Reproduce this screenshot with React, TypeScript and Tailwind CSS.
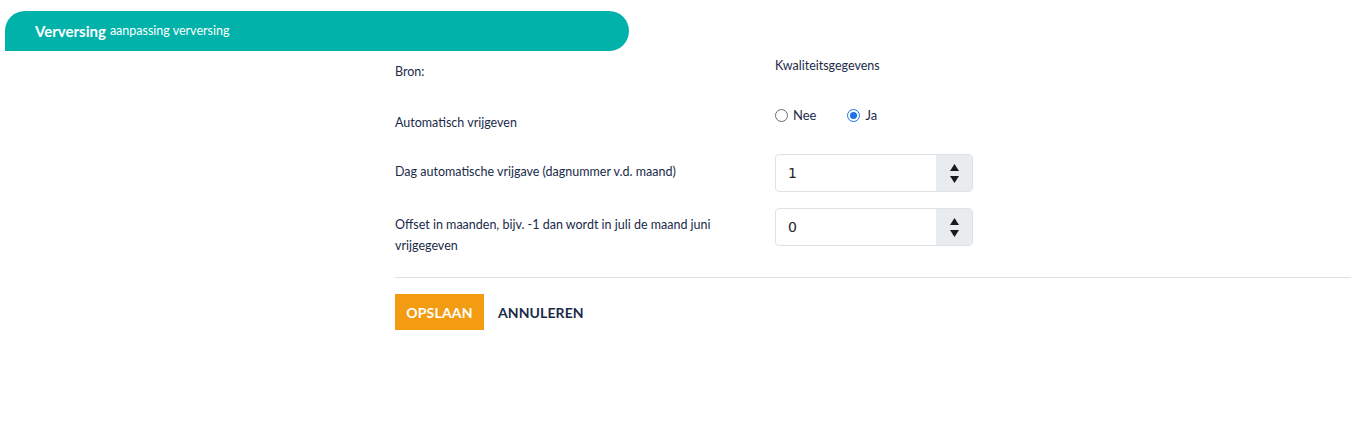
import React from "react";

function NumberField({ value }: { value: string }) {
  return (
    <div className="flex h-[38px] w-[198px] overflow-hidden rounded-[4px] border border-[#dee2e6] bg-white">
      <div className="flex flex-1 items-center pl-[12px] text-[14px] text-[#212529]" style={{ fontFamily: '"DejaVu Sans", sans-serif' }}>
        {value}
      </div>
      <div className="flex w-[36px] flex-col items-center justify-center gap-[5px] bg-[#e9ecef]">
        <svg width="9" height="7" viewBox="0 0 9 7"><polygon points="4.5,0 9,7 0,7" fill="#1a1a1a" /></svg>
        <svg width="9" height="7" viewBox="0 0 9 7"><polygon points="0,0 9,0 4.5,7" fill="#1a1a1a" /></svg>
      </div>
    </div>
  );
}

function Radio({ checked, label }: { checked: boolean; label: string }) {
  return (
    <label className="flex items-center gap-[5px]">
      {checked ? (
        <span className="flex h-[13px] w-[13px] items-center justify-center rounded-full border-[1.5px] border-[#1a73e8] bg-white">
          <span className="h-[7px] w-[7px] rounded-full bg-[#1a73e8]" />
        </span>
      ) : (
        <span className="h-[13px] w-[13px] rounded-full border border-[#6b6b6b] bg-white" />
      )}
      <span className="text-[13px] text-[#1a2b49]">{label}</span>
    </label>
  );
}

export default function App() {
  return (
    <div className="min-h-[439px] w-full bg-white text-[#1a2b49]" style={{ fontFamily: 'Lato, "Open Sans", sans-serif' }}>
      <div className="pt-[11px] pl-[5px]">
        <div className="flex h-[40px] w-[624px] items-center rounded-tl-[20px] rounded-r-[20px] bg-[#00b2a9] pl-[30px] text-white">
          <span className="text-[15px] font-bold">Verversing</span>
          <span className="ml-[4px] text-[12.5px]">aanpassing verversing</span>
        </div>
      </div>

      <div className="ml-[395px] text-[12.5px]">
        <div className="flex h-[52px] items-start">
          <div className="w-[380px] pt-[12px]">Bron:</div>
          <div className="pt-[6px] text-[12.5px]">Kwaliteitsgegevens</div>
        </div>
        <div className="flex h-[51px] items-start">
          <div className="w-[380px] pt-[11px]">Automatisch vrijgeven</div>
          <div className="flex items-center gap-[31px] pt-[3px]">
            <Radio checked={false} label="Nee" />
            <Radio checked={true} label="Ja" />
          </div>
        </div>
        <div className="flex h-[54px] items-start">
          <div className="w-[380px] pt-[9px]">Dag automatische vrijgave (dagnummer v.d. maand)</div>
          <NumberField value="1" />
        </div>
        <div className="flex items-start">
          <div className="w-[380px] pt-[6px] leading-[21px]">
            <div className="w-[330px]">Offset in maanden, bijv. -1 dan wordt in juli de maand juni vrijgegeven</div>
          </div>
          <NumberField value="0" />
        </div>
        <div className="mt-[21px] border-t border-[#dee2e6]" />
        <div className="mt-[16px] flex items-center gap-[14px]">
          <button className="h-[36px] w-[89px] bg-[#f39c12] text-[14px] font-bold tracking-[0.2px] text-white">OPSLAAN</button>
          <button className="text-[14px] font-bold tracking-[0.1px] text-[#1a2b49]">ANNULEREN</button>
        </div>
      </div>
    </div>
  );
}
